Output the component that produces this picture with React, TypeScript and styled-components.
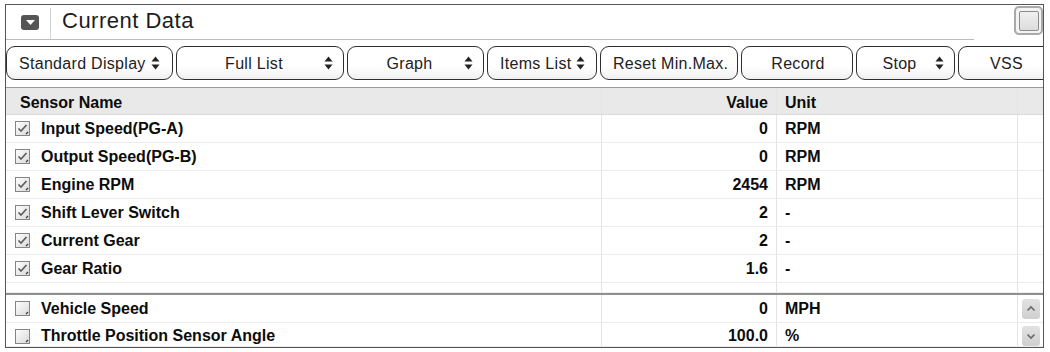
import React from 'react';
import styled, { createGlobalStyle } from 'styled-components';

const GlobalStyle = createGlobalStyle`
    * {
        box-sizing: border-box;
    }
    body {
        margin: 0;
        background: #ffffff;
        font-family: 'Liberation Sans', Arial, sans-serif;
        color: #111111;
    }
`;

const Panel = styled.div`
    margin: 4px 0 0 5px;
    width: 1039px;
    height: 344px;
    border: 1px solid #555555;
    background: #ffffff;
    overflow: hidden;
    display: flex;
    flex-direction: column;
`;

const TitleBar = styled.div`
    height: 35px;
    display: flex;
`;

const TitleMain = styled.div`
    width: 968px;
    display: flex;
    align-items: center;
    border-bottom: 1px solid #bdbdbd;
`;

const CollapseBox = styled.div`
    width: 18px;
    height: 15px;
    margin-left: 15px;
    border-radius: 3px;
    background: #555555;
    display: flex;
    align-items: center;
    justify-content: center;
`;

const TitleDivider = styled.div`
    width: 1px;
    align-self: stretch;
    margin: 3px 11px 0 11px;
    background: #d4d4d4;
`;

const TitleText = styled.div`
    font-size: 22px;
    letter-spacing: 0.5px;
    color: #1c1c1c;
    padding-bottom: 2px;
`;

const Corner = styled.div`
    flex: 1;
    display: flex;
    justify-content: flex-end;
    align-items: flex-start;
    padding: 1px 0 0 0;
`;

const CornerButton = styled.div`
    width: 29px;
    height: 29px;
    border-radius: 5px;
    border: 2px solid #a9a9a9;
    background: #f3f3f3;
    display: flex;
    align-items: center;
    justify-content: center;
`;

const CornerInner = styled.div`
    width: 20px;
    height: 20px;
    border: 1px solid #8c8c8c;
    border-radius: 2px;
    background: linear-gradient(#f0f0f0, #dcdcdc);
`;

const Toolbar = styled.div`
    height: 48px;
    display: flex;
    gap: 3px;
    padding: 6px 0 0 0;
    border-bottom: 1px solid #9a9a9a;
`;

const ToolButton = styled.div<{ $w: number }>`
    flex: none;
    width: ${(p) => p.$w}px;
    height: 34px;
    border: 1px solid #2e2e2e;
    border-radius: 9px;
    background: linear-gradient(#ffffff 60%, #f1f1f1);
    display: flex;
    align-items: center;
    padding: 0 10px 0 12px;
    font-size: 16px;
    letter-spacing: 0.3px;
    color: #222222;
    white-space: nowrap;
`;

const ButtonLabel = styled.span<{ $center: boolean }>`
    flex: ${(p) => (p.$center ? 1 : 'none')};
    text-align: center;
    padding-top: 1px;
`;

const SpinIcon = styled.svg`
    flex: none;
    margin-left: 5px;
`;

const Table = styled.div`
    display: flex;
    flex-direction: column;
`;

const Row = styled.div<{ $h: number; $head?: boolean; $shift?: number }>`
    display: grid;
    grid-template-columns: 596px 175px 241px 1fr;
    height: ${(p) => p.$h}px;
    background: ${(p) => (p.$head ? '#e9e9e9' : '#ffffff')};
    border-bottom: 1px solid ${(p) => (p.$head ? '#d9d9d9' : '#ececec')};
    font-size: 16px;
    font-weight: bold;
    color: #0c0c0c;

    && > div {
        padding-top: ${(p) => p.$shift ?? 0}px;
    }
`;

const Cell = styled.div<{ $right?: boolean; $pad?: number }>`
    display: flex;
    align-items: center;
    justify-content: ${(p) => (p.$right ? 'flex-end' : 'flex-start')};
    padding-left: ${(p) => (p.$right ? 0 : p.$pad ?? 8)}px;
    padding-right: ${(p) => (p.$right ? 8 : 0)}px;
    border-right: 1px solid #e4e4e4;
    white-space: nowrap;
`;

const EndCell = styled.div`
    display: flex;
    align-items: center;
    justify-content: center;
`;

const CheckWrap = styled.span`
    display: inline-flex;
    margin-right: 11px;
`;

const Separator = styled.div`
    height: 2px;
    background: #8f8f8f;
`;

const ScrollButton = styled.div`
    width: 18px;
    height: 20px;
    border-radius: 3px;
    background: linear-gradient(#e2e2e2, #cfcfcf);
    display: flex;
    align-items: center;
    justify-content: center;
`;

const Spin = () => (
    <SpinIcon width="9" height="14" viewBox="0 0 9 14">
        <path d="M4.5 0.5 L8.5 5.5 L0.5 5.5 Z" fill="#222" />
        <path d="M0.5 8.5 L8.5 8.5 L4.5 13.5 Z" fill="#222" />
    </SpinIcon>
);

const CheckBox = ({ checked }: { checked: boolean }) => (
    <CheckWrap>
        <svg width="15" height="15" viewBox="0 0 15 15">
            <defs>
                <linearGradient id="cbg" x1="0" y1="0" x2="1" y2="1">
                    <stop offset="0" stopColor="#ffffff" />
                    <stop offset="1" stopColor="#d8d8d8" />
                </linearGradient>
            </defs>
            <rect x="0.5" y="0.5" width="14" height="14" fill="url(#cbg)" stroke="#858585" />
            {checked && (
                <path d="M3.5 7.5 L6 10 L11.5 4" fill="none" stroke="#5e5e5e" strokeWidth="1.7" />
            )}
            <path d="M11 13 L13 11" stroke="#333" strokeWidth="1.1" />
        </svg>
    </CheckWrap>
);

const Chevron = ({ up }: { up: boolean }) => (
    <svg width="10" height="7" viewBox="0 0 10 7">
        <path
            d={up ? 'M1.5 5.5 L5 2 L8.5 5.5' : 'M1.5 1.5 L5 5 L8.5 1.5'}
            fill="none"
            stroke="#6a6a6a"
            strokeWidth="1.6"
        />
    </svg>
);

type Sensor = { name: string; value: string; unit: string; checked: boolean };

const topRows: Sensor[] = [
    { name: 'Input Speed(PG-A)', value: '0', unit: 'RPM', checked: true },
    { name: 'Output Speed(PG-B)', value: '0', unit: 'RPM', checked: true },
    { name: 'Engine RPM', value: '2454', unit: 'RPM', checked: true },
    { name: 'Shift Lever Switch', value: '2', unit: '-', checked: true },
    { name: 'Current Gear', value: '2', unit: '-', checked: true },
    { name: 'Gear Ratio', value: '1.6', unit: '-', checked: true },
];

const bottomRows: Sensor[] = [
    { name: 'Vehicle Speed', value: '0', unit: 'MPH', checked: false },
    { name: 'Throttle Position Sensor Angle', value: '100.0', unit: '%', checked: false },
];

const buttons = [
    { label: 'Standard Display', w: 167, spin: true, center: false },
    { label: 'Full List', w: 168, spin: true, center: true },
    { label: 'Graph', w: 137, spin: true, center: true },
    { label: 'Items List', w: 110, spin: true, center: false },
    { label: 'Reset Min.Max.', w: 138, spin: false, center: true },
    { label: 'Record', w: 112, spin: false, center: true },
    { label: 'Stop', w: 99, spin: true, center: true },
    { label: 'VSS', w: 95, spin: false, center: true },
];

const App = () => {
    return (
        <>
            <GlobalStyle />
            <Panel>
                <TitleBar>
                    <TitleMain>
                        <CollapseBox>
                            <svg width="9" height="5" viewBox="0 0 9 5">
                                <path d="M0 0 L9 0 L4.5 5 Z" fill="#ffffff" />
                            </svg>
                        </CollapseBox>
                        <TitleDivider />
                        <TitleText>Current Data</TitleText>
                    </TitleMain>
                    <Corner>
                        <CornerButton>
                            <CornerInner />
                        </CornerButton>
                    </Corner>
                </TitleBar>
                <Toolbar>
                    {buttons.map((b) => (
                        <ToolButton key={b.label} $w={b.w}>
                            <ButtonLabel $center={b.center || !b.spin}>{b.label}</ButtonLabel>
                            {b.spin && <Spin />}
                        </ToolButton>
                    ))}
                </Toolbar>
                <Table>
                    <Row $h={27} $head $shift={3}>
                        <Cell $pad={14}>Sensor Name</Cell>
                        <Cell $right>Value</Cell>
                        <Cell>Unit</Cell>
                        <EndCell />
                    </Row>
                    {topRows.map((r) => (
                        <Row key={r.name} $h={28}>
                            <Cell $pad={9}>
                                <CheckBox checked={r.checked} />
                                {r.name}
                            </Cell>
                            <Cell $right>{r.value}</Cell>
                            <Cell>{r.unit}</Cell>
                            <EndCell />
                        </Row>
                    ))}
                    <Row $h={10}>
                        <Cell />
                        <Cell />
                        <Cell />
                        <EndCell />
                    </Row>
                    <Separator />
                    {bottomRows.map((r, i) => (
                        <Row key={r.name} $h={i === 0 ? 28 : 24} $shift={i === 0 ? 0 : 3}>
                            <Cell $pad={9}>
                                <CheckBox checked={r.checked} />
                                {r.name}
                            </Cell>
                            <Cell $right>{r.value}</Cell>
                            <Cell>{r.unit}</Cell>
                            <EndCell>
                                <ScrollButton>
                                    <Chevron up={i === 0} />
                                </ScrollButton>
                            </EndCell>
                        </Row>
                    ))}
                </Table>
            </Panel>
        </>
    );
};

export default App;
